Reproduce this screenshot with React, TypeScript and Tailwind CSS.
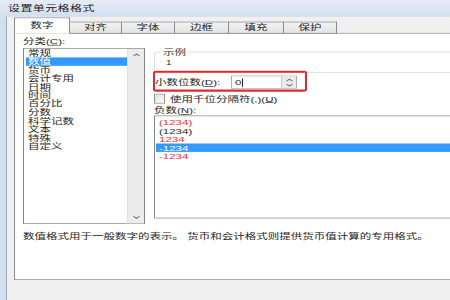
import React from 'react';

// The reference is a vertically squashed screenshot, so the dialog is laid out at
// natural size and squashed with scale-y to 70%.

const categories = ['常规', '数值', '货币', '会计专用', '日期', '时间', '百分比', '分数', '科学记数', '文本', '特殊', '自定义'];

const negatives = [
  { text: '(1234)', red: true },
  { text: '(1234)', red: false },
  { text: '1234', red: true },
  { text: '-1234', red: false, selected: true },
  { text: '-1234', red: true },
];

const tabs = [
  { label: '数字', w: 'w-[56px]' },
  { label: '对齐', w: 'w-[52px]' },
  { label: '字体', w: 'w-[53px]' },
  { label: '边框', w: 'w-[54px]' },
  { label: '填充', w: 'w-[55px]' },
  { label: '保护', w: 'w-[53px]' },
];

function Chevron({ down }: { down?: boolean }) {
  return (
    <svg width="7" height="5" viewBox="0 0 7 5" className="text-[#6f6f6f]">
      <path d={down ? 'M0.5 1 L3.5 4 L6.5 1' : 'M0.5 4 L3.5 1 L6.5 4'} fill="none" stroke="currentColor" strokeWidth="1.2" />
    </svg>
  );
}

export default function App() {
  return (
    <div className="w-[450px] h-[300px] overflow-hidden bg-[#f0f0f0]">
      <div className="w-[450px] h-[429px] origin-top scale-y-[0.7] flex flex-col font-['Liberation_Sans','Noto_Sans_CJK_SC',sans-serif] text-[#262626]">
        {/* title bar */}
        <div className="h-[24px] shrink-0 bg-gradient-to-b from-[#e4ecf6] to-[#d2dfee] pl-[8px] flex items-center text-[12px] tracking-[0.4px] text-[#1c1c1c]">
          设置单元格格式
        </div>

        <div className="flex flex-1 min-h-0">
          {/* window frame */}
          <div className="w-[7px] shrink-0 bg-[#d3dfec] border-r border-[#9aabbf]" />

          <div className="flex flex-col pl-[7px] w-[480px] shrink-0">
            {/* tabs */}
            <div className="mt-[3px] h-[21px] flex items-end relative z-10 -mb-px">
              {tabs.map((t, i) =>
                i === 0 ? (
                  <div
                    key={t.label}
                    className={`${t.w} h-[23px] bg-white border border-b-0 border-[#898c95] flex items-center justify-center text-[11.5px]`}
                  >
                    {t.label}
                  </div>
                ) : (
                  <div
                    key={t.label}
                    className={`${t.w} h-[17px] bg-gradient-to-b from-[#f3f3f3] to-[#e3e3e3] border border-l-0 border-[#898c95] flex items-center justify-center text-[11.5px]`}
                  >
                    {t.label}
                  </div>
                )
              )}
            </div>

            {/* tab panel */}
            <div className="h-[353px] shrink-0 bg-white border border-[#898c95] relative flex flex-col">
              <div className="flex">
                {/* category column */}
                <div className="pl-[8px] flex flex-col">
                  <div className="mt-[4px] h-[14px] leading-[14px] text-[11.5px]">
                    分类(<span className="underline">C</span>):
                  </div>
                  <div className="mt-[3px] w-[122px] h-[251px] border border-[#828790] flex">
                    <div className="flex-1 flex flex-col">
                      {categories.map((c) =>
                        c === '数值' ? (
                          <div key={c} className="h-[12.07px] leading-[12.07px] text-[11.5px] ml-[2px] pl-[2px] bg-[#3399ff] text-white">
                            {c}
                          </div>
                        ) : (
                          <div key={c} className="h-[12.07px] leading-[12.07px] text-[11.5px] pl-[4px]">
                            {c}
                          </div>
                        )
                      )}
                    </div>
                    <div className="w-[17px] bg-[#ececec] border-l border-[#e0e0e0] flex flex-col items-center justify-between py-[6px]">
                      <Chevron />
                      <Chevron down />
                    </div>
                  </div>
                </div>

                {/* right column */}
                <div className="ml-[9px] flex-1 flex flex-col">
                  <div className="mt-[26px] h-[30px] border border-[#d5dfe5] rounded-[2px] relative">
                    <span className="absolute -top-[8px] left-[6px] bg-white px-[2px] text-[11.5px] leading-[14px] text-[#3a3a3a]">
                      示例
                    </span>
                    <div className="pl-[11px] pt-[8px] text-[10px] leading-[14px]">1</div>
                  </div>

                  <div className="mt-[4px] h-[19px] flex items-center">
                    <div className="w-[77px] pl-[1px] text-[11.5px] leading-[14px] whitespace-nowrap">
                      小数位数(<span className="underline">D</span>):
                    </div>
                    <div className="w-[66px] h-[19px] border border-[#abadb3] flex items-center">
                      <div className="flex-1 pl-[3px] text-[11.5px] leading-[14px] flex items-center">
                        0<span className="w-px h-[12px] bg-[#222] ml-px" />
                      </div>
                      <div className="w-[15px] h-full border-l border-[#c9c9c9] bg-[#ebebeb] flex flex-col items-center justify-center gap-[2px]">
                        <Chevron />
                        <Chevron down />
                      </div>
                    </div>
                  </div>

                  <div className="mt-[7px] h-[14px] flex items-center">
                    <div className="w-[11px] h-[14px] border border-[#8f8f8f] bg-gradient-to-br from-[#e2e2e2] to-[#fafafa]" />
                    <div className="ml-[5px] text-[11.5px] leading-[14px]">
                      使用千位分隔符(,)(<span className="underline">U</span>)
                    </div>
                  </div>

                  <div className="mt-[3px] h-[14px] text-[11.5px] leading-[14px]">
                    负数(<span className="underline">N</span>):
                  </div>

                  <div className="h-[147px] border border-[#828790] pt-[3px] flex flex-col">
                    {negatives.map((n, i) =>
                      n.selected ? (
                        <div key={i} className="h-[12.07px] leading-[12.07px] text-[11.5px] ml-[1px] pl-[3px] bg-[#3399ff] text-white">
                          {n.text}
                        </div>
                      ) : (
                        <div
                          key={i}
                          className={`h-[12.07px] leading-[12.07px] text-[11.5px] pl-[4px] ${n.red ? 'text-[#e5343a]' : 'text-[#262626]'}`}
                        >
                          {n.text}
                        </div>
                      )
                    )}
                  </div>
                </div>
              </div>

              <div className="mt-[10px] pl-[8px] text-[11.5px] leading-[14px] whitespace-nowrap">
                数值格式用于一般数字的表示。 货币和会计格式则提供货币值计算的专用格式。
              </div>

              {/* red annotation */}
              <div className="absolute left-[138px] top-[53px] w-[154px] h-[30px] border-x-2 border-y-[3px] border-[#e3282e] rounded-[3px]" />
            </div>

            <div className="mt-[9px] ml-[439px] w-[40px] h-[29px] border border-[#6e8fb8] rounded-[3px] bg-gradient-to-b from-[#f2f2f2] to-[#dcdcdc]" />
          </div>
        </div>
      </div>
    </div>
  );
}
